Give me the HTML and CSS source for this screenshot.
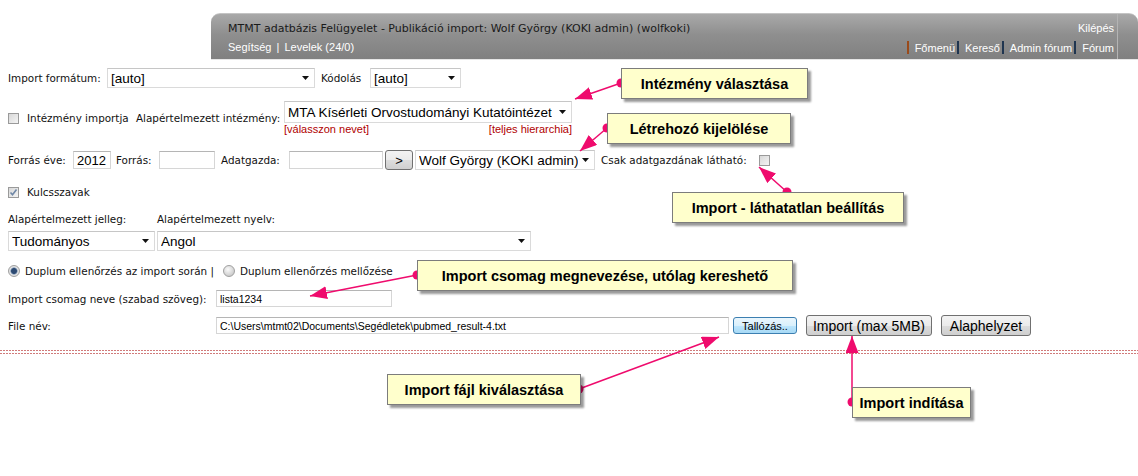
FILE: index.html
```html
<!DOCTYPE html>
<html lang="hu">
<head>
<meta charset="utf-8">
<title>Publikáció import</title>
<link rel="stylesheet" href="styles.css">
</head>
<body>
<div class="topbar">
  <div class="topbar-inner">
    <div class="tb-row">
      <span class="title">MTMT adatbázis Felügyelet - Publikáció import: Wolf György (KOKI admin) (wolfkoki)</span>
      <span class="tb-link">Kilépés</span>
    </div>
    <div class="tb-row">
      <span class="tb-link">Segítség <span class="pipe">|</span> Levelek (24/0)</span>
      <span class="tb-link menu"><span class="bar bar-o"></span>Főmenü<span class="bar"></span>Kereső<span class="bar"></span>Admin fórum<span class="bar"></span>Fórum</span>
    </div>
  </div>
</div>

<div class="form">
  <div class="row r1">
    <span class="lbl w-fmt">Import formátum:</span>
    <div class="sel w-fmtsel"><span class="val">[auto]</span><svg class="caret" viewBox="0 0 7 4"><path d="M0 0h7L3.5 4z"/></svg></div>
    <span class="lbl w-kod">Kódolás</span>
    <div class="sel w-kodsel"><span class="val">[auto]</span><svg class="caret" viewBox="0 0 7 4"><path d="M0 0h7L3.5 4z"/></svg></div>
  </div>

  <div class="row r2">
    <span class="cb"></span>
    <span class="lbl w-intimp">Intézmény importja</span>
    <span class="lbl w-alapint">Alapértelmezett intézmény:</span>
    <div class="selblock">
      <div class="sel tall w-intsel"><span class="val">MTA Kísérleti Orvostudományi Kutatóintézet</span><svg class="caret" viewBox="0 0 7 4"><path d="M0 0h7L3.5 4z"/></svg></div>
      <div class="redlinks"><span>[válasszon nevet]</span><span>[teljes hierarchia]</span></div>
    </div>
  </div>

  <div class="row r3">
    <span class="lbl w-fev">Forrás éve:</span>
    <span class="inp year w-year">2012</span>
    <span class="lbl w-forras">Forrás:</span>
    <span class="inp w-forrasinp"></span>
    <span class="lbl w-adat">Adatgazda:</span>
    <span class="inp w-adatinp"></span>
    <span class="btn w-gt">&gt;</span>
    <div class="sel w-wolf"><span class="val">Wolf György (KOKI admin)</span><svg class="caret" viewBox="0 0 7 4"><path d="M0 0h7L3.5 4z"/></svg></div>
    <span class="lbl w-csak">Csak adatgazdának látható:</span>
    <span class="cb"></span>
  </div>

  <div class="row r4">
    <span class="cb checked"><svg viewBox="0 0 9 9"><path d="M1.5 4.5l2 2.2L7.5 1.5" fill="none" stroke="#6f87a6" stroke-width="1.6"/></svg></span>
    <span class="lbl cb-lbl">Kulcsszavak</span>
  </div>

  <div class="pair r5">
    <span class="lbl">Alapértelmezett jelleg:</span>
    <span class="lbl">Alapértelmezett nyelv:</span>
  </div>
  <div class="pair r6">
    <div class="sel"><span class="val">Tudományos</span><svg class="caret" viewBox="0 0 7 4"><path d="M0 0h7L3.5 4z"/></svg></div>
    <div class="sel"><span class="val">Angol</span><svg class="caret" viewBox="0 0 7 4"><path d="M0 0h7L3.5 4z"/></svg></div>
  </div>

  <div class="row r7">
    <span class="radio on"></span>
    <span class="lbl rad-lbl w-dup1">Duplum ellenőrzés az import során |</span>
    <span class="radio"></span>
    <span class="lbl rad-lbl">Duplum ellenőrzés mellőzése</span>
  </div>

  <div class="row r8">
    <span class="lbl w-csomag">Import csomag neve (szabad szöveg):</span>
    <span class="inp small w-csomaginp">lista1234</span>
  </div>

  <div class="row r9">
    <span class="lbl w-csomag">File név:</span>
    <span class="inp small w-file">C:\Users\mtmt02\Documents\Segédletek\pubmed_result-4.txt</span>
    <span class="btn browse">Tallózás..</span>
    <span class="btn big w-import">Import (max 5MB)</span>
    <span class="btn big w-reset">Alaphelyzet</span>
  </div>
</div>

<div class="sep"></div>

<svg class="arrows" viewBox="0 0 1138 476" width="1138" height="476">
  <defs>
    <marker id="ah" markerUnits="userSpaceOnUse" markerWidth="18" markerHeight="14" refX="17" refY="6.5" orient="auto">
      <path d="M0 0L17 6.5L0 13z" fill="#ef0b6d"/>
    </marker>
  </defs>
  <g stroke="#ef0b6d" stroke-width="1.5" fill="none">
    <line x1="621" y1="83" x2="575" y2="99" marker-end="url(#ah)"/>
    <line x1="607" y1="128" x2="580" y2="151" marker-end="url(#ah)"/>
    <line x1="787" y1="192" x2="759" y2="167" marker-end="url(#ah)"/>
    <line x1="417" y1="275" x2="310" y2="296" marker-end="url(#ah)"/>
    <line x1="579" y1="389" x2="719" y2="337" marker-end="url(#ah)"/>
    <line x1="852" y1="402" x2="852" y2="336" marker-end="url(#ah)"/>
  </g>
  <g fill="#ef0b6d">
    <circle cx="621" cy="83" r="4.5"/>
    <circle cx="607" cy="128" r="4.5"/>
    <circle cx="787" cy="192" r="4.5"/>
    <circle cx="417" cy="275" r="4.5"/>
    <circle cx="579" cy="389" r="4.5"/>
    <circle cx="852" cy="402" r="4.5"/>
  </g>
</svg>

<div class="callout c1">Intézmény választása</div>
<div class="callout c2">Létrehozó kijelölése</div>
<div class="callout c3">Import - láthatatlan beállítás</div>
<div class="callout c4">Import csomag megnevezése, utólag kereshető</div>
<div class="callout c5">Import fájl kiválasztása</div>
<div class="callout c6">Import indítása</div>
</body>
</html>
```

FILE: styles.css
```css
* { box-sizing: border-box; }

body {
  margin: 0;
  width: 1138px;
  height: 476px;
  overflow: hidden;
  position: relative;
  background: #fff;
  color: #111;
  font-family: "DejaVu Sans", Verdana, sans-serif;
  font-size: 10.4px;
}

/* ---------- top bar ---------- */
.topbar {
  margin: 13px 0 0 211px;
  height: 46px;
  padding-right: 20px;
  border-radius: 9px 9px 0 0;
  border-top: 1px solid #c4c4c4;
  background: linear-gradient(#a9a9a9, #8f8f8f 45%, #808080);
  box-shadow: 0 1px 0 #e6e6e6;
}
.topbar-inner {
  height: 100%;
  padding: 7px 3px 0 17px;
  border-right: 1px solid #b4b4b4;
}
.tb-row {
  display: flex;
  justify-content: space-between;
  align-items: center;
  height: 14px;
}
.tb-row + .tb-row { margin-top: 5px; }
.title { color: #1a1a1a; font-size: 11px; }
.tb-link {
  font-family: "Liberation Sans", Arial, sans-serif;
  font-size: 11px;
  color: #fff;
  white-space: nowrap;
}
.pipe { margin: 0 2px; }
.bar {
  display: inline-block;
  vertical-align: -2px;
  width: 2px;
  height: 13px;
  margin: 0 6px 0 2px;
  background: #1f3550;
}
.bar-o { background: #9a4a1a; margin-left: 0; }

/* ---------- form ---------- */
.form { padding-left: 8px; }
.row { display: flex; align-items: center; }
.lbl { white-space: nowrap; flex: none; }

.sel {
  display: flex;
  align-items: center;
  justify-content: space-between;
  flex: none;
  height: 20px;
  padding: 0 5px 0 3px;
  background: #fff;
  border: 1px solid #dadada;
  border-top-color: #c6c6c6;
  font-family: "Liberation Sans", Arial, sans-serif;
  font-size: 13.5px;
  color: #000;
  white-space: nowrap;
  overflow: hidden;
}
.sel .val { overflow: hidden; }
.sel.tall { height: 22px; }
.caret { width: 7px; height: 4px; flex: none; fill: #111; margin-left: 4px; }

.inp {
  display: flex;
  align-items: center;
  flex: none;
  height: 18px;
  padding: 0 3px;
  background: #fff;
  border: 1px solid #d6d6d6;
  border-top-color: #b5b5b5;
  font-family: "Liberation Sans", Arial, sans-serif;
  font-size: 10.5px;
  color: #000;
  white-space: nowrap;
}
.inp.year { font-size: 13px; }
.inp.small { height: 17px; }

.btn {
  display: flex;
  align-items: center;
  justify-content: center;
  flex: none;
  height: 20px;
  border: 1px solid #707070;
  border-radius: 3px;
  background: linear-gradient(#f3f3f3, #ebebeb 50%, #dddddd 51%, #cfcfcf);
  font-family: "Liberation Sans", Arial, sans-serif;
  font-size: 13px;
  color: #000;
  white-space: nowrap;
}
.btn.big { height: 21px; font-size: 14px; }
.btn.browse {
  width: 64px;
  height: 17px;
  margin-left: 4px;
  border-color: #3c7fb1;
  background: linear-gradient(#eaf6fd, #d9f0fc 50%, #bee6fd 51%, #a7d9f5);
  font-size: 11px;
}

.cb {
  display: inline-flex;
  align-items: center;
  justify-content: center;
  flex: none;
  width: 11px;
  height: 11px;
  border: 1px solid #9a9a9a;
  background: linear-gradient(135deg, #d8d8d8, #f4f4f4);
}
.cb svg { width: 9px; height: 9px; }

.radio {
  flex: none;
  width: 12px;
  height: 12px;
  border-radius: 50%;
  border: 1px solid #a0a0a0;
  background: radial-gradient(circle at 40% 35%, #fafafa, #cfcfcf 70%, #bdbdbd);
}
.radio.on {
  background: radial-gradient(circle, #2d4a72 0 2.5px, #7e95b2 3.2px, #e8e8e8 4px, #c9c9c9);
}

/* widths (positions of the original layout) */
.w-fmt { width: 99px; }
.w-fmtsel { width: 208px; }
.w-kod { width: 49px; margin-left: 6px; }
.w-kodsel { width: 91px; }

.w-intimp { width: 109px; margin-left: 8px; }
.w-alapint { width: 148px; }
.w-intsel { width: 288px; }

.w-fev { width: 65px; }
.w-year { width: 38px; }
.w-forras { width: 43px; margin-left: 5px; }
.w-forrasinp { width: 56px; }
.w-adat { width: 68px; margin-left: 6px; }
.w-adatinp { width: 94px; }
.w-gt { width: 28px; margin-left: 2px; }
.w-wolf { width: 180px; margin-left: 2px; }
.w-csak { width: 158px; margin-left: 6px; }

.cb-lbl { margin-left: 8px; }
.rad-lbl { margin-left: 5px; }
.w-dup1 { width: 198px; }

.w-csomag { width: 208px; }
.w-csomaginp { width: 176px; }
.w-file { width: 513px; height: 18px; }
.w-import { width: 126px; margin-left: 9px; }
.w-reset { width: 90px; margin-left: 9px; }

/* rows vertical rhythm */
.r1 { margin-top: 9px; height: 20px; }
.r2 { margin-top: 13px; }
.selblock { display: flex; flex-direction: column; }
.redlinks {
  display: flex;
  justify-content: space-between;
  height: 12px;
  line-height: 12px;
  font-family: "Liberation Sans", Arial, sans-serif;
  font-size: 11px;
  color: #b00000;
}
.r3 { margin-top: 15px; height: 20px; }
.r4 { margin-top: 16px; height: 12px; }
.pair { display: grid; grid-template-columns: 147px 374px; column-gap: 2px; }
.r5 { margin-top: 15px; height: 12px; align-items: center; }
.r6 { margin-top: 6px; }
.r7 { margin-top: 14px; height: 12px; }
.r8 { margin-top: 13px; height: 17px; }
.r9 { margin-top: 8px; height: 21px; }

.sep {
  margin-top: 14px;
  height: 4px;
  background:
    repeating-linear-gradient(90deg, #d07a7a 0 2px, #fff 2px 3px) top / 100% 1px no-repeat,
    repeating-linear-gradient(90deg, #d07a7a 0 2px, #fff 2px 3px) bottom / 100% 1px no-repeat;
}

/* ---------- annotations ---------- */
.arrows {
  position: absolute;
  left: 0;
  top: 0;
  pointer-events: none;
}
.callout {
  position: absolute;
  display: flex;
  align-items: center;
  justify-content: center;
  height: 31px;
  background: #ffffcc;
  border: 1px solid #7c7c7c;
  box-shadow: 3px 3px 2px rgba(0, 0, 0, 0.4);
  font-family: "Liberation Sans", Arial, sans-serif;
  font-weight: bold;
  font-size: 14.5px;
  color: #000;
  white-space: nowrap;
}
.c1 { left: 621px; top: 68px; width: 187px; }
.c2 { left: 607px; top: 113px; width: 184px; }
.c3 { left: 672px; top: 192px; width: 232px; }
.c4 { left: 417px; top: 260px; width: 376px; }
.c5 { left: 387px; top: 374px; width: 194px; }
.c6 { left: 852px; top: 387px; width: 119px; }
```
